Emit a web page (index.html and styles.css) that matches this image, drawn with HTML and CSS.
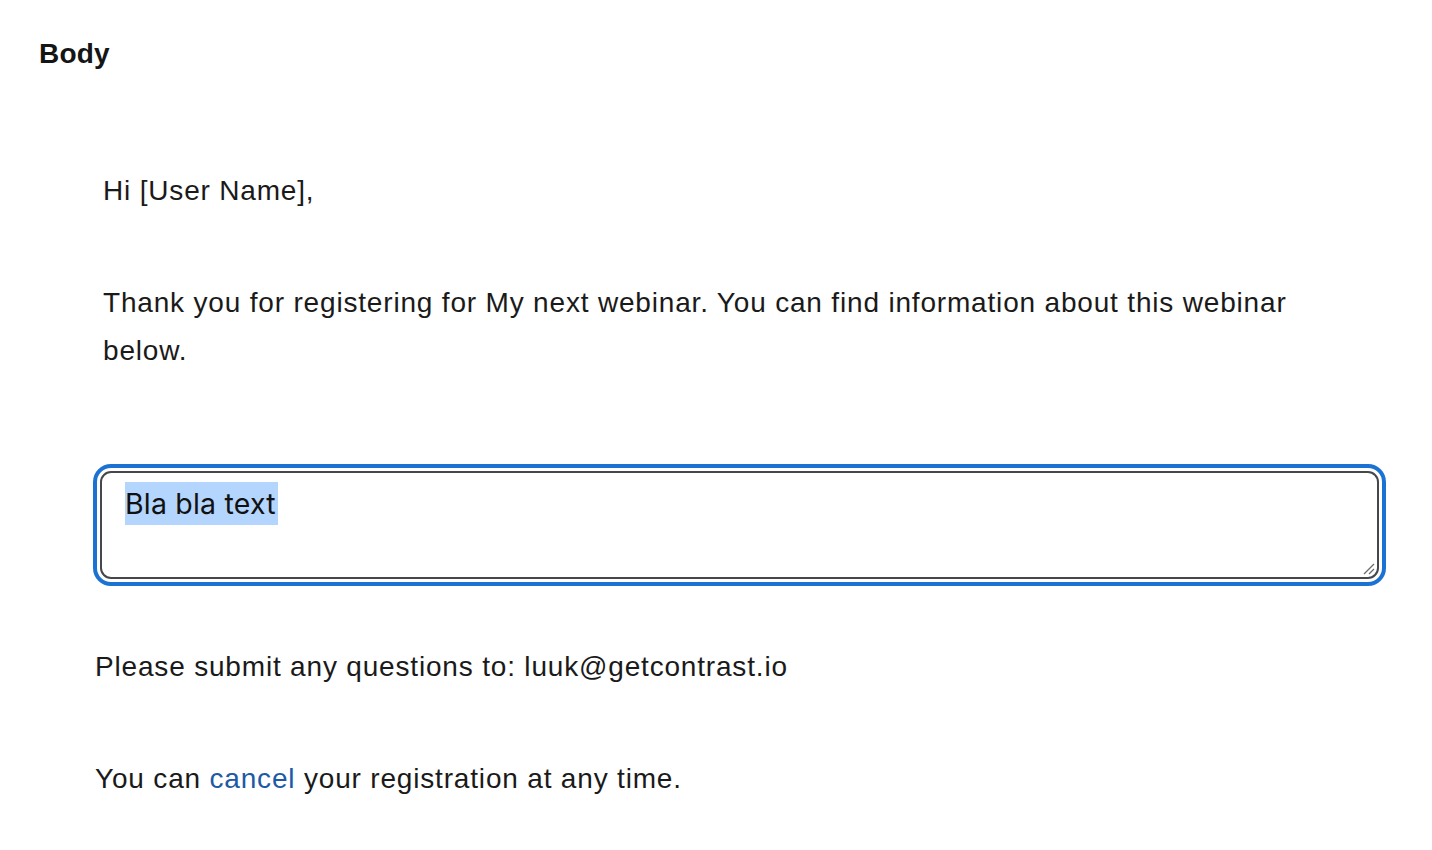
FILE: index.html
```html
<!DOCTYPE html>
<html lang="en">
<head>
<meta charset="utf-8">
<title>Body</title>
<link rel="stylesheet" href="styles.css">
</head>
<body>
<main class="page">
  <h2 class="section-title">Body</h2>
  <div class="email">
    <div class="intro">
      <p class="line greeting">Hi [User Name],</p>
      <p class="line message">Thank you for registering for My next webinar. You can find information about this webinar below.</p>
    </div>
    <div class="editor">
      <div class="textarea"><span class="selected">Bla bla text</span></div>
      <svg class="grip" width="14" height="14" viewBox="0 0 14 14" aria-hidden="true">
        <path d="M2 12 L12 2" stroke="#6b6b6b" stroke-width="1.3" fill="none"/>
        <path d="M7 12 L12 7" stroke="#6b6b6b" stroke-width="1.3" fill="none"/>
      </svg>
    </div>
    <p class="line questions">Please submit any questions to: luuk@getcontrast.io</p>
    <p class="line cancel-line">You can <a class="link" href="#">cancel</a> your registration at any time.</p>
  </div>
</main>
</body>
</html>
```
FILE: styles.css
```css
* { box-sizing: border-box; }
html, body { margin: 0; padding: 0; background: #ffffff; }
body {
  font-family: "Liberation Sans", Arial, Helvetica, sans-serif;
  color: #1a1a1a;
}
.page {
  padding: 38px 0 0 39px;
  width: 1432px;
}
.section-title {
  margin: 0;
  font-size: 28px;
  font-weight: 700;
  line-height: 32px;
  letter-spacing: 0.2px;
  color: #151515;
}
.email {
  margin-left: 56px;
  width: 1294px;
}
.line {
  margin: 0;
  font-size: 28px;
  line-height: 48px;
  letter-spacing: 0.82px;
}
.intro {
  padding-left: 8px;
  padding-top: 97px;
  width: 1240px;
}
.message {
  margin-top: 64px;
}
.editor {
  position: relative;
  margin-top: 96px;
  margin-left: 5px;
  width: 1279px;
}
.textarea {
  height: 108px;
  border: 2px solid #46474b;
  border-radius: 11px;
  outline: 4px solid #1b72d3;
  outline-offset: 3.5px;
  padding: 9px 0 0 23px;
  font-family: Inter, "Noto Sans", sans-serif;
  font-size: 28.5px;
  line-height: 43px;
  letter-spacing: 0.2px;
  color: #111111;
}
.selected {
  display: inline-block;
  line-height: 43px;
  padding-right: 2px;
  background: #b4d5fd;
}
.grip {
  position: absolute;
  right: 3px;
  bottom: 3px;
}
.questions {
  margin-top: 64px;
}
.cancel-line {
  margin-top: 64px;
}
.link {
  color: #1c5aa6;
  text-decoration: none;
}
```
